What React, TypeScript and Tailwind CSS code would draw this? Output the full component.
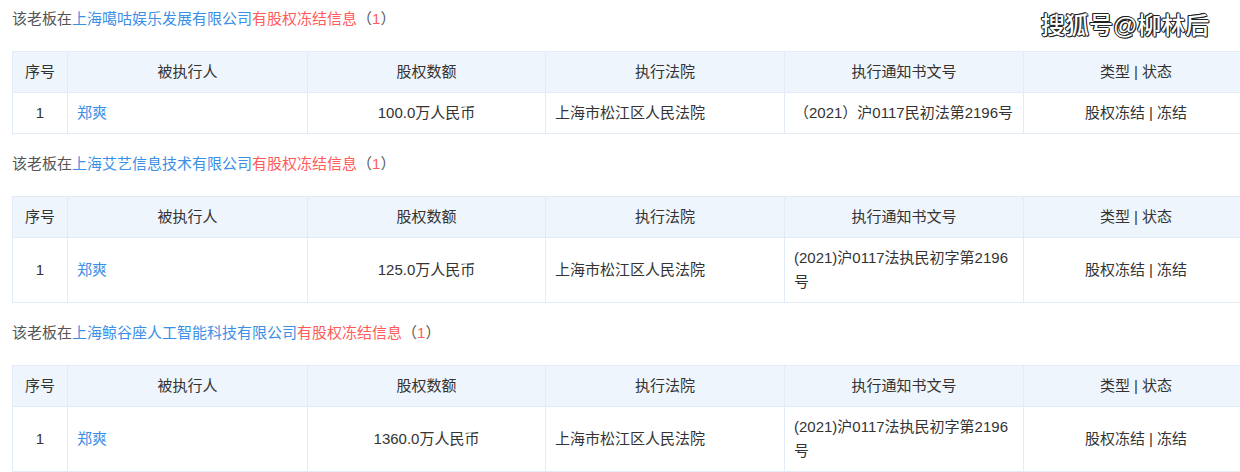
import React from 'react';

type Record = {
	company: string;
	amount: string;
	docNo: string;
};

const records: Record[] = [
	{ company: '上海噶咕娱乐发展有限公司', amount: '100.0万人民币', docNo: '（2021）沪0117民初法第2196号' },
	{ company: '上海艾艺信息技术有限公司', amount: '125.0万人民币', docNo: '(2021)沪0117法执民初字第2196号' },
	{ company: '上海鲸谷座人工智能科技有限公司', amount: '1360.0万人民币', docNo: '(2021)沪0117法执民初字第2196号' }
];

const headers = ['序号', '被执行人', '股权数额', '执行法院', '执行通知书文号', '类型 | 状态'];

const cell = 'border border-[#e3ecf6] px-[9px] py-[8px] leading-[24px] align-middle';

function FreezeSection({ record, first }: { record: Record; first: boolean }) {
	return (
		<div className={first ? '' : 'mt-[18px]'}>
			<div className="leading-[24px] text-[15px] text-[#555]">
				该老板在<span className="text-[#3b8fe6]">{record.company}</span>
				<span className="text-[#ff5b5b]">有股权冻结信息</span>（<span className="text-[#ff5b5b]">1</span>）
			</div>
			<table className="mt-[20px] w-[1236px] table-fixed border-collapse text-[15px] text-[#333]">
				<colgroup>
					<col className="w-[55px]" />
					<col className="w-[240px]" />
					<col className="w-[238px]" />
					<col className="w-[239px]" />
					<col className="w-[239px]" />
					<col className="w-[225px]" />
				</colgroup>
				<thead>
					<tr className="bg-[#eff5fc]">
						{headers.map((h) => (
							<th key={h} className={`${cell} text-center font-normal`}>
								{h}
							</th>
						))}
					</tr>
				</thead>
				<tbody>
					<tr>
						<td className={`${cell} text-center`}>1</td>
						<td className={`${cell} text-left text-[#3b8fe6]`}>郑爽</td>
						<td className={`${cell} text-center`}>{record.amount}</td>
						<td className={`${cell} text-left`}>上海市松江区人民法院</td>
						<td className={`${cell} pr-[6px] pl-[9px] text-left`}>{record.docNo}</td>
						<td className={`${cell} text-center`}>股权冻结 | 冻结</td>
					</tr>
				</tbody>
			</table>
		</div>
	);
}

export default function App() {
	return (
		<div
			className="relative h-[472px] w-[1240px] overflow-hidden bg-white pt-[7px] pl-[12px]"
			style={{ fontFamily: '"Liberation Sans", "Noto Sans CJK SC", sans-serif' }}
		>
			{records.map((record, i) => (
				<FreezeSection key={record.company} record={record} first={i === 0} />
			))}

			{/* watermark */}
			<div className="absolute top-[11px] left-[1041px] text-[24px] leading-[30px] font-medium text-white [text-shadow:1px_0_0_#222,-1px_0_0_#222,0_1px_0_#222,0_-1px_0_#222,1px_1px_0_#222,-1px_-1px_0_#222]">
				搜狐号@柳林后
			</div>
		</div>
	);
}
